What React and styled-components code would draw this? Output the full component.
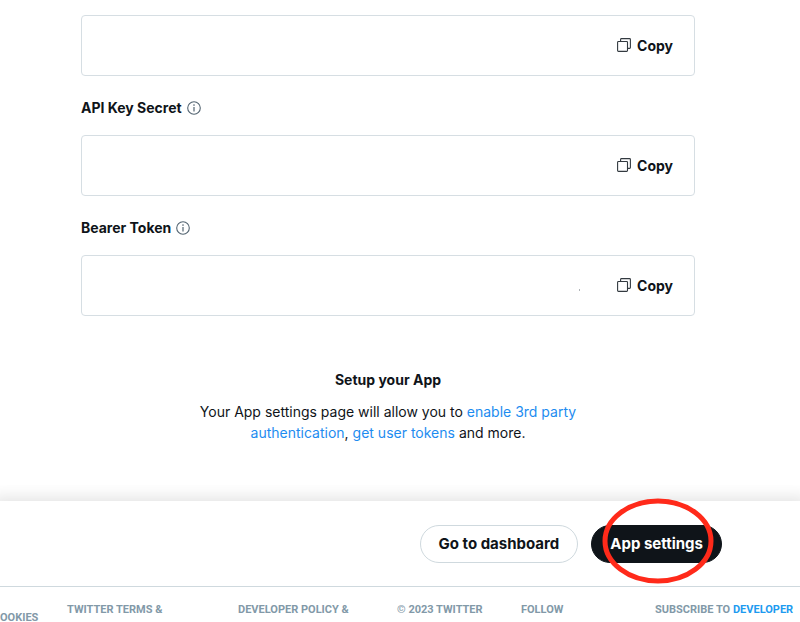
import React from 'react';
import styled, { createGlobalStyle } from 'styled-components';

const GlobalStyle = createGlobalStyle`
  * {
    box-sizing: border-box;
  }

  body {
    margin: 0;
    background-color: #fff;
    color: #0f1419;
    font-family: Inter, 'Liberation Sans', sans-serif;
    overflow-x: hidden;
  }
`;

const Content = styled.main`
  padding: 15px 105px 58px 81px;
`;

const Field = styled.section`
  margin-bottom: 20px;
`;

const FieldLabel = styled.h2`
  display: flex;
  align-items: center;
  gap: 5px;
  height: 24px;
  margin: 0 0 15px;
  font-size: 14px;
  font-weight: 700;
  line-height: 24px;
`;

const InfoIcon = styled.svg`
  width: 14px;
  height: 14px;
  color: #536471;
`;

const KeyBox = styled.div`
  display: flex;
  align-items: center;
  justify-content: flex-end;
  height: 61px;
  padding: 0 21px;
  border: 1px solid #d6dee3;
  border-radius: 4px;
`;

const Speck = styled.span`
  width: 1px;
  height: 2px;
  margin: 8px 37px 0 0;
  background-color: #b0b4b8;
`;

const CopyButton = styled.button`
  display: flex;
  align-items: center;
  gap: 6px;
  padding: 0;
  border: none;
  background: none;
  color: inherit;
  font-family: inherit;
  font-size: 14px;
  font-weight: 700;
  line-height: 20px;
  cursor: pointer;

  svg {
    width: 14px;
    height: 14px;
    margin-bottom: 2px;
  }
`;

const Setup = styled.section`
  padding-top: 34px;
  text-align: center;
`;

const SetupTitle = styled.h3`
  margin: 0 0 11px;
  font-size: 14px;
  font-weight: 700;
  line-height: 20px;
`;

const SetupText = styled.p`
  max-width: 400px;
  margin: 0 auto;
  font-size: 14px;
  line-height: 21px;
`;

const TextLink = styled.a`
  color: #1d8cf0;
  text-decoration: none;

  &:hover {
    text-decoration: underline;
  }
`;

const ActionBar = styled.div`
  display: flex;
  justify-content: flex-end;
  gap: 13px;
  padding: 24px 78px 23px 20px;
  background-color: #fff;
  box-shadow: 0 5px 16px 8px rgba(0, 0, 0, 0.12);
  clip-path: inset(-16px 0 0 0);
`;

const PillButton = styled.button`
  height: 38px;
  padding: 0 18px;
  border: 1px solid ${({ $primary }) => ($primary ? '#0f1419' : '#cfd9de')};
  border-radius: 19px;
  background-color: ${({ $primary }) => ($primary ? '#0f1419' : '#fff')};
  color: ${({ $primary }) => ($primary ? '#fff' : '#0f1419')};
  font-family: inherit;
  font-size: 15px;
  font-weight: 700;
  line-height: 20px;
  white-space: nowrap;
  cursor: pointer;
`;

const Highlighted = styled.div`
  position: relative;
`;

// hand-drawn ring laid over the button
const Ring = styled.svg`
  position: absolute;
  top: -27px;
  right: 8px;
  width: 112px;
  height: 86px;
  pointer-events: none;
`;

const Footer = styled.footer`
  display: grid;
  grid-template-columns: 67px 171px 159px 124px 134px 1fr;
  padding-top: 15px;
  border-top: 1px solid #cfd9de;
  color: #8299a8;
  font-family: Roboto, 'Liberation Sans', sans-serif;
  font-size: 11px;
  font-weight: 700;
  line-height: 16px;
  white-space: nowrap;
  overflow: hidden;
`;

const FooterItem = styled.span`
  padding-top: ${({ $low }) => ($low ? 8 : 0)}px;
`;

const FooterLink = styled(TextLink)`
  color: #1d9bf0;
`;

function Info() {
  return (
    <InfoIcon viewBox="0 0 14 14" fill="none" stroke="currentColor" aria-hidden="true">
      <circle cx="7" cy="7" r="6.3" strokeWidth="1.1" />
      <path d="M7 6.1v4.3" strokeWidth="1.2" />
      <circle cx="7" cy="4.1" r="0.8" fill="currentColor" stroke="none" />
    </InfoIcon>
  );
}

function Copy() {
  return (
    <CopyButton type="button">
      <svg viewBox="0 0 14 14" fill="none" stroke="#333a40" aria-hidden="true">
        <path d="M3.6 3.8V1.4q0-0.8 0.8-0.8h8.2q0.8 0 0.8 0.8v8.2q0 0.8-0.8 0.8H10.4" strokeWidth="1.1" />
        <rect x="0.6" y="3.5" width="9.9" height="9.9" rx="0.8" strokeWidth="1.1" />
      </svg>
      Copy
    </CopyButton>
  );
}

function KeyField({ label, speck }) {
  return (
    <Field>
      {label && (
        <FieldLabel>
          {label}
          <Info />
        </FieldLabel>
      )}
      <KeyBox>
        {speck && <Speck />}
        <Copy />
      </KeyBox>
    </Field>
  );
}

export default function App() {
  return (
    <>
      <GlobalStyle />
      <Content>
        <KeyField />
        <KeyField label="API Key Secret" />
        <KeyField label="Bearer Token" speck />

        <Setup>
          <SetupTitle>Setup your App</SetupTitle>
          <SetupText>
            Your App settings page will allow you to{' '}
            <TextLink href="#authentication">enable 3rd party authentication</TextLink>,{' '}
            <TextLink href="#tokens">get user tokens</TextLink> and more.
          </SetupText>
        </Setup>
      </Content>

      <ActionBar>
        <PillButton type="button">Go to dashboard</PillButton>
        <Highlighted>
          <PillButton type="button" $primary>
            App settings
          </PillButton>
          <Ring viewBox="0 0 112 86" fill="none" aria-hidden="true">
            <ellipse cx="56" cy="43" rx="53" ry="40" stroke="#ff2a1a" strokeWidth="5" />
          </Ring>
        </Highlighted>
      </ActionBar>

      <Footer>
        <FooterItem $low>OOKIES</FooterItem>
        <FooterItem>TWITTER TERMS &amp;</FooterItem>
        <FooterItem>DEVELOPER POLICY &amp;</FooterItem>
        <FooterItem>© 2023 TWITTER</FooterItem>
        <FooterItem>FOLLOW</FooterItem>
        <FooterItem>
          SUBSCRIBE TO <FooterLink href="#developer">DEVELOPER</FooterLink>
        </FooterItem>
      </Footer>
    </>
  );
}
